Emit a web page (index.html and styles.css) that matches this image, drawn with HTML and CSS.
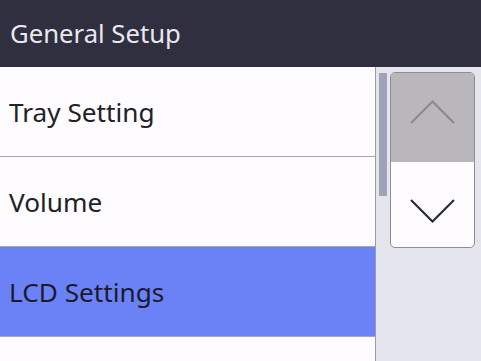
FILE: index.html
```html
<!DOCTYPE html>
<html lang="en">
<head>
  <meta charset="UTF-8">
  <meta name="viewport" content="width=device-width, initial-scale=1.0">
  <title>General Setup</title>
  <link rel="stylesheet" href="styles.css">
</head>
<body>
  <div class="header">
    <h1>General Setup</h1>
  </div>

  <div class="main">
    <ul class="menu-list">
      <li class="menu-item">Tray Setting</li>
      <li class="menu-item">Volume</li>
      <li class="menu-item selected">LCD Settings</li>
      <li class="menu-item"></li>
    </ul>

    <div class="side-panel">
      <div class="scrollbar"></div>
      <div class="scroll-buttons">
        <div class="scroll-btn btn-up">
          <svg width="45" height="24" viewBox="0 0 45 24">
            <polyline points="1,23 22.5,1.5 44,23" fill="none" stroke="#8b8a8e" stroke-width="2.2"/>
          </svg>
        </div>
        <div class="scroll-btn btn-down">
          <svg width="45" height="24" viewBox="0 0 45 24">
            <polyline points="1,1 22.5,22.5 44,1" fill="none" stroke="#2c2b3a" stroke-width="2.2"/>
          </svg>
        </div>
      </div>
    </div>
  </div>
</body>
</html>
```

FILE: styles.css
```css
body {
  font-family: 'Noto Sans', 'Open Sans', Arial, sans-serif;
  margin: 0;
  width: 481px;
  height: 361px;
  overflow: hidden;
  background-color: #e5e6ed;
}

.header {
  height: 67px;
  background-color: #302f40;
  display: flex;
  align-items: center;
  padding-left: 10px;
}

.header h1 {
  margin: 0;
  font-size: 25.7px;
  font-weight: normal;
  color: #e9e8f0;
  line-height: 68px;
}

.main {
  display: flex;
  height: 294px;
  overflow: hidden;
}

.menu-list {
  list-style: none;
  margin: 0;
  padding: 0;
  width: 375px;
  border-right: 1px solid #9c9ba0;
  background-color: #fefcff;
}

.menu-item {
  height: 89px;
  line-height: 91px;
  padding-left: 9px;
  font-size: 26.2px;
  color: #222128;
  border-bottom: 1px solid #a9a8ac;
  overflow: hidden;
}

.menu-item.selected {
  background-color: #6a82f5;
  color: #1c1b2c;
}

.side-panel {
  display: flex;
  align-items: flex-start;
  padding-left: 3px;
  gap: 3px;
}

.scrollbar {
  width: 8px;
  height: 123px;
  margin-top: 6px;
  background-color: #a0a2b9;
}

.scroll-buttons {
  width: 83px;
  margin-top: 5px;
  border: 1px solid #8e8d92;
  border-radius: 5px;
  overflow: hidden;
  background-color: #fefcff;
}

.scroll-btn {
  display: flex;
  justify-content: center;
}

.scroll-btn svg {
  display: block;
}

.btn-up {
  height: 62px;
  padding-top: 27px;
  background-color: #b9b7bb;
}

.btn-down {
  height: 48px;
  padding-top: 37px;
}
```
